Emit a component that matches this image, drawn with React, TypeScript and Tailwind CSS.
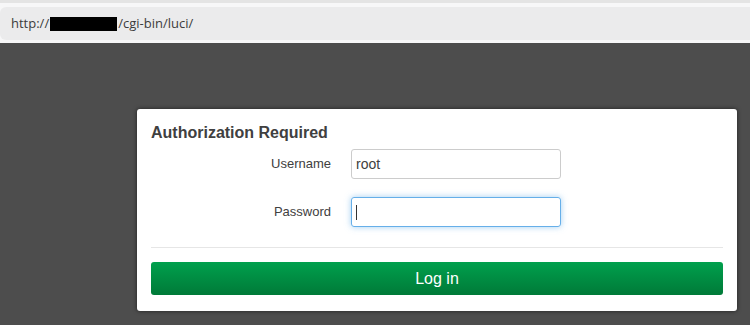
import React from "react";

export default function App() {
  return (
    <div className="flex h-[325px] w-[750px] flex-col overflow-hidden bg-[#4d4d4d] font-['Liberation_Sans',Arial,sans-serif]">
      {/* Browser address bar */}
      <div className="flex h-[43px] flex-col bg-[#f7f7f8]">
        <div className="h-[3px] bg-[#e4e4e4]" />
        <div className="mt-[4px] flex h-[33px] items-center rounded-l-[6px] bg-[#ebebec] pl-[11px] text-[13px] text-[#3c3c3c] font-['Open_Sans',sans-serif]">
          <span>http://</span>
          <span className="mx-[1px] inline-block h-[14px] w-[67px] bg-black" />
          <span>/cgi-bin/luci/</span>
        </div>
      </div>

      {/* Login card */}
      <div className="ml-[137px] mt-[66px] w-[600px] rounded-[3px] bg-white px-[14px] pb-[16px] pt-[14px] shadow-[0_0_4px_rgba(0,0,0,0.6)]">
        <h2 className="text-[16px] font-bold leading-[20px] text-[#404040]">
          Authorization Required
        </h2>
        <div className="mt-[6px] flex flex-col gap-[18px] text-[13px] text-[#404040]">
          <div className="flex items-center">
            <label className="w-[180px] text-right">Username</label>
            <input
              defaultValue="root"
              className="ml-[20px] h-[30px] w-[210px] rounded-[3px] border border-[#cccccc] px-[4px] text-[14px] text-[#404040] outline-none"
            />
          </div>
          <div className="flex items-center">
            <label className="w-[180px] text-right">Password</label>
            <div className="ml-[20px] flex h-[30px] w-[210px] items-center rounded-[3px] border border-[#66afe9] px-[4px] shadow-[0_0_6px_rgba(102,175,233,0.6)]">
              <span className="h-[15px] w-[1px] bg-[#333]" />
            </div>
          </div>
        </div>
        <div className="mt-[20px] h-px bg-[#e6e6e6]" />
        <button className="mt-[14px] h-[33px] w-full rounded-[3px] bg-gradient-to-b from-[#00a04d] to-[#007a38] text-[16px] text-white">
          Log in
        </button>
      </div>
    </div>
  );
}
